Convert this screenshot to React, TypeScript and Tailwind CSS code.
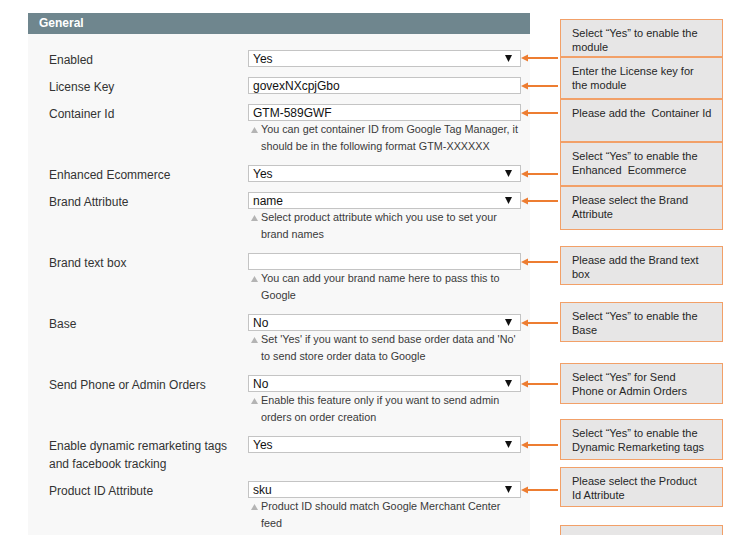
import React from 'react';

type Row = {
  label: string[];
  value: string;
  select?: boolean;
  hint?: string[];
  arrowTop?: number;
};

const rows: Row[] = [
  { label: ['Enabled'], value: 'Yes', select: true, arrowTop: 3 },
  { label: ['License Key'], value: 'govexNXcpjGbo' },
  {
    label: ['Container Id'],
    value: 'GTM-589GWF',
    hint: ['You can get container ID from Google Tag Manager, it', 'should be in the following format GTM-XXXXXX'],
  },
  { label: ['Enhanced Ecommerce'], value: 'Yes', select: true },
  {
    label: ['Brand Attribute'],
    value: 'name',
    select: true,
    hint: ['Select product attribute which you use to set your', 'brand names'],
  },
  { label: ['Brand text box'], value: '', hint: ['You can add your brand name here to pass this to', 'Google'] },
  {
    label: ['Base'],
    value: 'No',
    select: true,
    hint: ["Set 'Yes' if you want to send base order data and 'No'", 'to send store order data to Google'],
  },
  {
    label: ['Send Phone or Admin Orders'],
    value: 'No',
    select: true,
    hint: ['Enable this feature only if you want to send admin', 'orders on order creation'],
  },
  { label: ['Enable dynamic remarketing tags', 'and facebook tracking'], value: 'Yes', select: true },
  {
    label: ['Product ID Attribute'],
    value: 'sku',
    select: true,
    hint: ['Product ID should match Google Merchant Center', 'feed'],
  },
];

// callout boxes down the right side: gap above, height, text lines
const notes: { mt: string; h: string; lines: string[] }[] = [
  { mt: 'mt-[19px]', h: 'h-[38px]', lines: ['Select \u201CYes\u201D to enable the', 'module'] },
  { mt: 'mt-0', h: 'h-[42px]', lines: ['Enter the License key for', 'the module'] },
  { mt: 'mt-0', h: 'h-[43px]', lines: ['Please add the  Container Id'] },
  { mt: 'mt-0', h: 'h-[44px]', lines: ['Select \u201CYes\u201D to enable the', 'Enhanced  Ecommerce'] },
  { mt: 'mt-0', h: 'h-[44px]', lines: ['Please select the Brand', 'Attribute'] },
  { mt: 'mt-[16px]', h: 'h-[39px]', lines: ['Please add the Brand text', 'box'] },
  { mt: 'mt-[17px]', h: 'h-[40px]', lines: ['Select \u201CYes\u201D to enable the', 'Base'] },
  { mt: 'mt-[21px]', h: 'h-[41px]', lines: ['Select \u201CYes\u201D for Send', 'Phone or Admin Orders'] },
  { mt: 'mt-[15px]', h: 'h-[41px]', lines: ['Select \u201CYes\u201D to enable the', 'Dynamic Remarketing tags'] },
  { mt: 'mt-[7px]', h: 'h-[40px]', lines: ['Please select the Product', 'Id Attribute'] },
  { mt: 'mt-[18px]', h: 'h-[40px]', lines: [] },
];

const Arrow: React.FC<{ top: number }> = ({ top }) => (
  <svg
    className="absolute left-full"
    style={{ top }}
    width="38"
    height="8"
    viewBox="0 0 38 8"
  >
    <line x1="6" y1="4" x2="38" y2="4" stroke="#ED7D31" strokeWidth="2" />
    <polygon points="1,4 8,0.6 8,7.4" fill="#ED7D31" />
  </svg>
);

const FieldRow: React.FC<{ row: Row }> = ({ row }) => (
  <div className="flex items-start">
    <div className="w-[199px] pr-[18px] pt-[1px] -mb-[2px] text-[12px] leading-[18px] text-[#333]">
      {row.label.map((l, i) => (
        <div key={i}>{l}</div>
      ))}
    </div>
    <div className="w-[273px]">
      <div className="relative h-[17px] border border-[#c4c4c4] bg-white flex items-center pl-[4px] pr-[8px] text-[12px] text-[#111]">
        <span className="flex-1 leading-none">{row.value}</span>
        {row.select && (
          <svg width="7" height="7" viewBox="0 0 7 7">
            <polygon points="0,0 7,0 3.5,7" fill="#111" />
          </svg>
        )}
        <Arrow top={row.arrowTop ?? 4} />
      </div>
      {row.hint && (
        <div className="relative pl-[13px] text-[10.8px] leading-[17px] text-[#3a3a3a] whitespace-nowrap">
          <svg className="absolute left-[3px] top-[6px]" width="7" height="6" viewBox="0 0 7 6">
            <polygon points="3.5,0 7,6 0,6" fill="#b4b4b4" />
          </svg>
          {row.hint.map((h, i) => (
            <div key={i}>{h}</div>
          ))}
        </div>
      )}
    </div>
  </div>
);

export default function App() {
  return (
    <div
      className="w-[750px] h-[535px] overflow-hidden bg-white flex"
      style={{ fontFamily: '"Liberation Sans", Arial, sans-serif' }}
    >
      <div className="w-[28px] shrink-0" />
      <div className="w-[502px] shrink-0 mt-[13px] flex flex-col">
        <div className="h-[21px] bg-[#6f868e] text-white font-bold text-[12px] leading-[21px] pl-[11px]">
          General
        </div>
        <div className="flex-1 bg-[#f8f8f8] pt-[16px] pl-[21px] flex flex-col gap-[10px]">
          {rows.map((r, i) => (
            <FieldRow key={i} row={r} />
          ))}
        </div>
      </div>
      <div className="w-[163px] shrink-0 ml-[30px] flex flex-col">
        {notes.map((n, i) => (
          <div
            key={i}
            className={`${n.mt} ${n.h} shrink-0 border-[1.5px] border-[#f2a068] bg-[#e7e6e6] pl-[11px] pt-[6px] text-[11px] leading-[14px] text-[#262626] whitespace-pre`}
          >
            {n.lines.map((l, j) => (
              <div key={j}>{l}</div>
            ))}
          </div>
        ))}
      </div>
    </div>
  );
}
